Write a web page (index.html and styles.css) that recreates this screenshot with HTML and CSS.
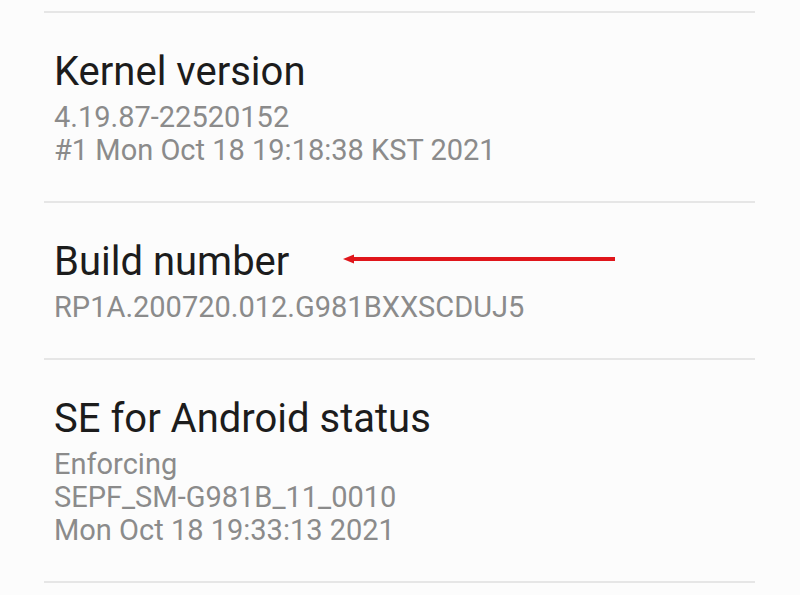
FILE: index.html
```html
<!DOCTYPE html>
<html lang="en">

<head>
    <meta charset="UTF-8">
    <meta name="viewport" content="width=device-width, initial-scale=1.0">
    <title>Software information</title>
    <link rel="stylesheet" href="styles.css">
</head>

<body>
    <div class="info-list">
        <div class="info-item">
            <div class="info-title">Kernel version</div>
            <div class="info-value">4.19.87-22520152</div>
            <div class="info-value">#1 Mon Oct 18 19:18:38 KST 2021</div>
        </div>

        <div class="info-item">
            <div class="info-title">
                <span>Build number</span>
                <svg class="arrow" width="274" height="12" viewBox="0 0 274 12">
                    <line x1="8" y1="6" x2="272" y2="6" stroke="#e0161b" stroke-width="4" stroke-linecap="butt" />
                    <polygon points="0,6 11,1.5 11,10.5" fill="#e0161b" />
                </svg>
            </div>
            <div class="info-value">RP1A.200720.012.G981BXXSCDUJ5</div>
        </div>

        <div class="info-item">
            <div class="info-title">SE for Android status</div>
            <div class="info-value">Enforcing</div>
            <div class="info-value">SEPF_SM-G981B_11_0010</div>
            <div class="info-value">Mon Oct 18 19:33:13 2021</div>
        </div>
    </div>
</body>
</html>
```

FILE: styles.css
```css
body {
    margin: 0;
    padding: 11px 45px 0 44px;
    background-color: #fcfcfc;
    font-family: Roboto, 'Noto Sans', sans-serif;
    overflow: hidden;
}

.info-list {
    border-bottom: 2px solid #e6e6e6;
}

.info-item {
    border-top: 2px solid #e6e6e6;
    padding: 37px 10px 34px;
}

.info-title {
    display: flex;
    align-items: center;
    font-size: 40px;
    line-height: 44px;
    color: #1c1c1c;
    margin-bottom: 7px;
}

.info-value {
    font-size: 29px;
    line-height: 33px;
    color: #8b8b8b;
}

.arrow {
    margin-left: 54px;
    margin-bottom: 6px;
}
```
